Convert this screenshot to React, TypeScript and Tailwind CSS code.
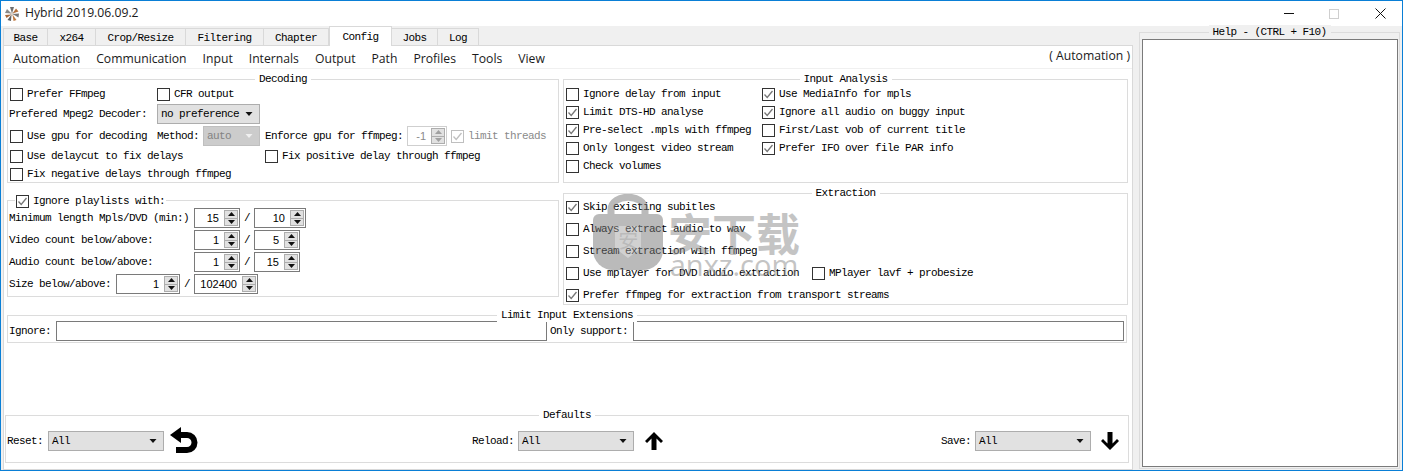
import type { ReactNode } from 'react'

const mono = "font-['Liberation_Mono','Noto_Sans_CJK_SC',monospace] text-[11px] tracking-[-0.6px] text-black"
const ui = "font-['Open_Sans','Noto_Sans',sans-serif] text-[12.2px] text-[#1a1a1a] tracking-normal"

function Group({ title, className, children, bg = 'bg-white' }: { title: string; className: string; children?: ReactNode; bg?: string }) {
  return (
    <div className={`relative border border-[#dcdcdc] ${className}`}>
      <span className={`absolute -top-[8px] left-1/2 -translate-x-1/2 whitespace-nowrap px-1 leading-[14px] ${bg}`}>{title}</span>
      {children}
    </div>
  )
}

function Check({ label, checked, disabled, className = '' }: { label: string; checked?: boolean; disabled?: boolean; className?: string }) {
  return (
    <div className={`flex items-center gap-[4px] ${className}`}>
      <span className={`flex h-[13px] w-[13px] shrink-0 items-center justify-center border bg-white ${disabled ? 'border-[#bfbfbf]' : 'border-[#333]'}`}>
        {checked && (
          <svg viewBox="0 0 11 11" className="h-[11px] w-[11px]" fill="none" stroke={disabled ? '#bfbfbf' : '#777'} strokeWidth="1.3">
            <path d="M1.5 5.500 4.200 8.500 9.500 2" />
          </svg>
        )}
      </span>
      <span className={`whitespace-nowrap ${disabled ? 'text-[#8a8a8a]' : ''}`}>{label}</span>
    </div>
  )
}

function Combo({ value, className, disabled }: { value: string; className: string; disabled?: boolean }) {
  return (
    <div className={`flex h-[20px] shrink-0 items-center justify-between border pl-[3px] pr-[6px] ${disabled ? 'border-[#bfbfbf] bg-[#cccccc] text-[#838383]' : 'border-[#adadad] bg-[#e1e1e1]'} ${className}`}>
      <span>{value}</span>
      <svg viewBox="0 0 7 4" className="h-[4px] w-[8px]" fill={disabled ? '#f0f0f0' : '#111'}>
        <path d="M0 0h7L3.500 4z" />
      </svg>
    </div>
  )
}

function Spin({ value, className, disabled }: { value: string; className: string; disabled?: boolean }) {
  const fill = disabled ? '#a0a0a0' : '#111'
  return (
    <div className={`flex h-[20px] shrink-0 items-center justify-end border bg-white pr-px ${disabled ? 'border-[#cfcfcf] text-[#8a8a8a]' : 'border-[#7a7a7a]'} ${className}`}>
      <span className="pr-[5px] font-['Liberation_Sans',sans-serif] text-[11px] tracking-normal">{value}</span>
      <div className="flex h-[16px] w-[14px] flex-col border border-[#adadad] bg-[#e1e1e1]">
        <div className="flex flex-1 items-center justify-center border-b border-[#adadad]">
          <svg viewBox="0 0 7 4" className="h-[4px] w-[7px]" fill={fill}><path d="M3.500 0 7 4H0z" /></svg>
        </div>
        <div className="flex flex-1 items-center justify-center">
          <svg viewBox="0 0 7 4" className="h-[4px] w-[7px]" fill={fill}><path d="M0 0h7L3.500 4z" /></svg>
        </div>
      </div>
    </div>
  )
}

function Slash() {
  return <span className="w-[14px] shrink-0 text-center">/</span>
}

const tabs = [
  ['Base', 'w-[45px]'],
  ['x264', 'w-[48px]'],
  ['Crop/Resize', 'w-[90px]'],
  ['Filtering', 'w-[78px]'],
  ['Chapter', 'w-[65px]'],
  ['Config', 'w-[63px]'],
  ['Jobs', 'w-[46px]'],
  ['Log', 'w-[41px]'],
]

const subTabs = ['Automation', 'Communication', 'Input', 'Internals', 'Output', 'Path', 'Profiles', 'Tools', 'View']

export default function App() {
  return (
    <div className={`relative flex h-[471px] w-[1403px] flex-col overflow-hidden border border-[#0a7fd6] bg-[#f0f0f0] ${mono}`}>
      {/* title bar */}
      <div className="flex h-[25px] shrink-0 items-center bg-white">
        <svg viewBox="0 0 14 14" className="ml-[4px] h-[14px] w-[14px]">
          <circle cx="7" cy="7" r="2" fill="#e8e0d8" />
          <path d="M7 6.500 5 0h4z" fill="#6f6f6f" />
          <path d="M7.500 6.500 11 1.500l2.500 3z" fill="#b5713c" />
          <path d="M7.500 7 14 6.500l-.5 4z" fill="#777" />
          <path d="M7.500 7.500 11.500 13 8.500 14z" fill="#c0793f" />
          <path d="M6.500 7.500 6 14l-3.500-1z" fill="#5f5f5f" />
          <path d="M6.500 7.500 1.500 11 0 8z" fill="#a9683a" />
          <path d="M6.500 6.500 0 6 2 2z" fill="#8a8a8a" />
        </svg>
        <span className={`ml-[6px] ${ui}`}>Hybrid 2019.06.09.2</span>
        <div className="ml-auto flex items-center">
          <span className="h-px w-[10px] bg-[#111]" />
          <span className="ml-[35px] h-[10px] w-[10px] border border-[#cfcfcf]" />
          <svg viewBox="0 0 11 11" className="ml-[36px] mr-[16px] h-[11px] w-[11px]" stroke="#111" strokeWidth="1"><path d="M.5.5l10 10M10.500.5l-10 10" /></svg>
        </div>
      </div>

      <div className="flex min-h-0 flex-1 pl-[2px] pr-[2px]">
        {/* left pane */}
        <div className="flex w-[1130px] shrink-0 flex-col">
          <div className="flex h-[19px] shrink-0 items-end">
            {tabs.map(([name, width]) =>
              name === 'Config' ? (
                <div key={name} className={`${width} z-10 -mb-px flex h-[20px] items-center justify-center border border-b-0 border-[#d9d9d9] bg-white pt-px`}>{name}</div>
              ) : (
                <div key={name} className={`${width} flex h-[17px] items-center justify-center border border-b-0 border-l-0 border-[#d9d9d9] pt-[2px] first:border-l`}>{name}</div>
              ),
            )}
          </div>
          <div className="flex min-h-0 flex-1 flex-col border border-[#d9d9d9] bg-white">
            <div className={`flex h-[23px] shrink-0 items-center border-b border-[#f0f0f0] pl-[9px] pr-[2px] pt-[5px] ${ui}`}>
              <div className="flex gap-[16px]">
                {subTabs.map((t) => (
                  <span key={t}>{t}</span>
                ))}
              </div>
              <span className="ml-auto -mt-[6px]">( Automation )</span>
            </div>

            <div className="flex shrink-0 gap-[4px] pl-[3px] pt-[10px]">
              {/* left column */}
              <div className="flex w-[552px] flex-col gap-[17px]">
                <Group title="Decoding" className="h-[104px] pl-[2px] pt-[5px]">
                  <div className="flex h-[18px] items-center">
                    <Check label="Prefer FFmpeg" className="w-[147px]" />
                    <Check label="CFR output" />
                  </div>
                  <div className="mt-px flex h-[20px] items-center">
                    <span className="-ml-px w-[148px] whitespace-nowrap">Prefered Mpeg2 Decoder:</span>
                    <Combo value="no preference" className="w-[103px]" />
                  </div>
                  <div className="mt-[2px] flex h-[20px] items-center">
                    <Check label="Use gpu for decoding" className="w-[147px]" />
                    <span className="w-[46px]">Method:</span>
                    <Combo value="auto" disabled className="w-[57px]" />
                    <span className="ml-[5px] w-[142px] whitespace-nowrap">Enforce gpu for ffmpeg:</span>
                    <Spin value="-1" disabled className="w-[40px]" />
                    <Check label="limit threads" checked disabled className="ml-[4px]" />
                  </div>
                  <div className="mt-px flex h-[18px] items-center">
                    <Check label="Use delaycut to fix delays" className="w-[255px]" />
                    <Check label="Fix positive delay through ffmpeg" />
                  </div>
                  <div className="flex h-[18px] items-center">
                    <Check label="Fix negative delays through ffmpeg" />
                  </div>
                </Group>

                <div className="relative h-[97px] border border-[#dcdcdc] pl-px pt-[6px]">
                  <div className="absolute -top-[8px] left-[7px] bg-white px-px">
                    <Check label="Ignore playlists with:" checked />
                  </div>
                  <div className="flex h-[22px] items-center">
                    <span className="w-[185px] whitespace-nowrap">Minimum length Mpls/DVD (min:)</span>
                    <Spin value="15" className="w-[46px]" />
                    <Slash />
                    <Spin value="10" className="w-[52px]" />
                  </div>
                  <div className="flex h-[22px] items-center">
                    <span className="w-[185px] whitespace-nowrap">Video count below/above:</span>
                    <Spin value="1" className="w-[46px]" />
                    <Slash />
                    <Spin value="5" className="w-[46px]" />
                  </div>
                  <div className="flex h-[22px] items-center">
                    <span className="w-[185px] whitespace-nowrap">Audio count below/above:</span>
                    <Spin value="1" className="w-[46px]" />
                    <Slash />
                    <Spin value="15" className="w-[46px]" />
                  </div>
                  <div className="flex h-[22px] items-center">
                    <span className="w-[107px] whitespace-nowrap">Size below/above:</span>
                    <Spin value="1" className="w-[64px]" />
                    <Slash />
                    <Spin value="102400" className="w-[64px]" />
                  </div>
                </div>
              </div>

              {/* right column */}
              <div className="flex w-[565px] flex-col gap-[10px]">
                <Group title="Input Analysis" className="h-[104px] pl-[2px] pt-[5px]">
                  <div className="grid grid-cols-[196px_1fr] auto-rows-[18px] items-center">
                    <Check label="Ignore delay from input" />
                    <Check label="Use MediaInfo for mpls" checked />
                    <Check label="Limit DTS-HD analyse" checked />
                    <Check label="Ignore all audio on buggy input" checked />
                    <Check label="Pre-select .mpls with ffmpeg" checked />
                    <Check label="First/Last vob of current title" />
                    <Check label="Only longest video stream" />
                    <Check label="Prefer IFO over file PAR info" checked />
                    <Check label="Check volumes" />
                  </div>
                </Group>
                <Group title="Extraction" className="h-[112px] pl-[2px] pt-[2px]">
                  <div className="flex h-[22px] items-center"><Check label="Skip existing subitles" checked /></div>
                  <div className="flex h-[22px] items-center"><Check label="Always extract audio to wav" /></div>
                  <div className="flex h-[22px] items-center"><Check label="Stream extraction with ffmpeg" /></div>
                  <div className="flex h-[22px] items-center">
                    <Check label="Use mplayer for DVD audio extraction" className="w-[246px]" />
                    <Check label="MPlayer lavf + probesize" />
                  </div>
                  <div className="flex h-[22px] items-center"><Check label="Prefer ffmpeg for extraction from transport streams" checked /></div>
                </Group>
              </div>
            </div>

            <div className="ml-[3px] mr-[5px] mt-[10px] shrink-0">
              <Group title="Limit Input Extensions" className="flex h-[28px] items-start pl-px pt-[5px]">
                <span className="w-[47px] leading-[20px]">Ignore:</span>
                <div className="h-[20px] w-[491px] border border-[#7a7a7a]" />
                <span className="w-[86px] whitespace-nowrap pl-[3px] leading-[20px]">Only support:</span>
                <div className="h-[20px] w-[491px] border border-[#7a7a7a]" />
              </Group>
            </div>

            <div className="mb-[6px] ml-px mr-[3px] mt-auto shrink-0">
              <Group title="Defaults" className="flex h-[48px] items-center pl-px pr-[9px] pt-[4px]">
                <span className="w-[41px]">Reset:</span>
                <Combo value="All" className="w-[116px]" />
                <svg viewBox="0 0 28 28" className="ml-[6px] h-[28px] w-[28px]" fill="none">
                  <path d="M11 0v16L0 8z" fill="#000" />
                  <path d="M9 8h8a7.500 7.500 0 0 1 0 15H6" stroke="#000" strokeWidth="6" />
                </svg>
                <span className="ml-[274px] w-[46px]">Reload:</span>
                <Combo value="All" className="w-[116px]" />
                <svg viewBox="0 0 18 18" className="ml-[11px] h-[18px] w-[18px]" fill="#000">
                  <path d="M9 0l9 9-2 2-4.500-4.500V18h-5V6.500L2 11 0 9z" />
                </svg>
                <span className="ml-auto w-[34px]">Save:</span>
                <Combo value="All" className="w-[116px]" />
                <svg viewBox="0 0 18 18" className="ml-[10px] h-[18px] w-[18px]" fill="#000">
                  <path d="M9 18 0 9l2-2 4.500 4.500V0h5v11.500L16 7l2 2z" />
                </svg>
              </Group>
            </div>
          </div>
        </div>

        {/* help */}
        <div className="ml-[6px] flex flex-1 flex-col pb-[1px] pt-[6px]">
          <Group title="Help - (CTRL + F10)" bg="bg-[#f0f0f0]" className="flex flex-1 flex-col pb-px pl-[2px] pr-px pt-[6px]">
            <div className="flex-1 border border-[#7a7a7a] bg-white" />
          </Group>
        </div>
      </div>

      {/* site watermark */}
      <div className="pointer-events-none absolute left-[592px] top-[193px] flex h-[80px] w-[216px] opacity-50">
        <svg viewBox="0 0 70 76" className="h-[76px] w-[70px] shrink-0">
          <path d="M18 24V16C18 -1 52 -1 52 16v8" fill="none" stroke="#777" strokeWidth="7" />
          <path d="M0 26a6 6 0 0 1 6-6h58a6 6 0 0 1 6 6v30a20 20 0 0 1-20 20H20A20 20 0 0 1 0 56z" fill="#777" />
          <path d="M22 32h26v22l-13 10-13-10z" fill="#a5a5a5" />
          <text x="35" y="54" textAnchor="middle" fontSize="20" fill="#777" fontFamily="Noto Sans CJK SC">安</text>
        </svg>
        <div className="ml-[5px] mt-[13px] flex shrink-0 flex-col items-center">
          <span className="font-['Noto_Sans_CJK_SC',sans-serif] text-[44px] font-bold leading-[50px] tracking-normal text-[#8a8a8a]">安下载</span>
          <span className="-mt-[3px] font-['Open_Sans',sans-serif] text-[29px] leading-[22px] tracking-normal text-[#8a8a8a]">anxz.com</span>
        </div>
      </div>
    </div>
  )
}
